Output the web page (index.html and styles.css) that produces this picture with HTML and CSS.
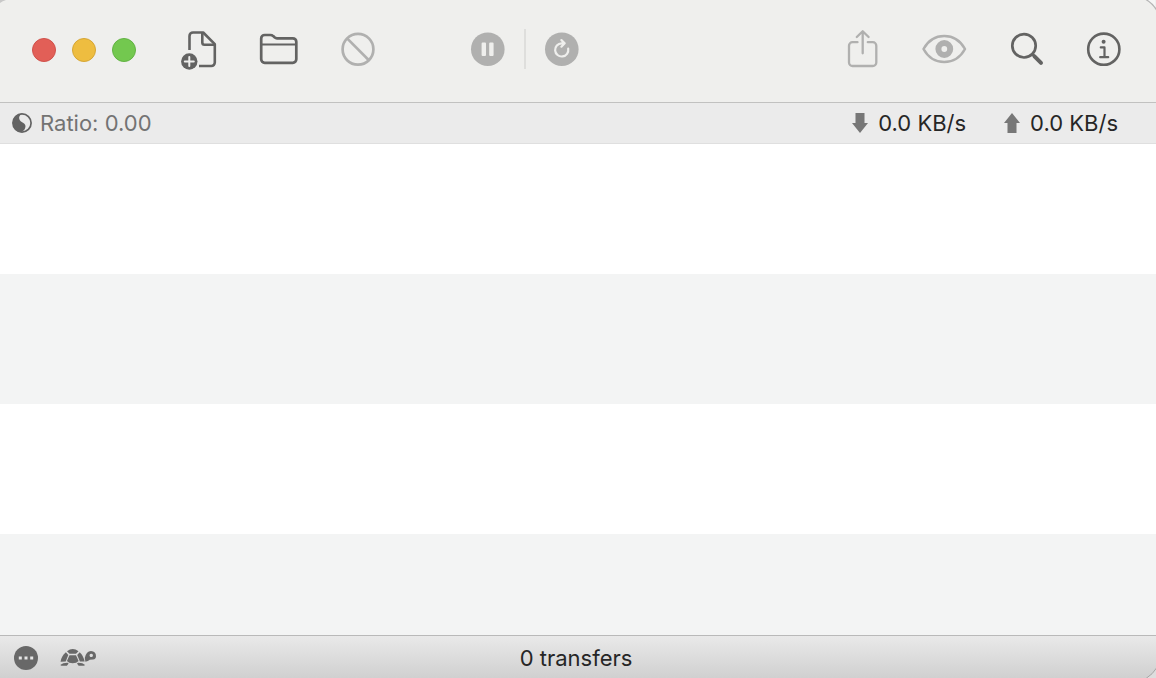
FILE: index.html
```html
<!DOCTYPE html>
<html lang="en">
<head>
<meta charset="utf-8">
<title>Transfers</title>
<link rel="stylesheet" href="styles.css">
</head>
<body>
<div class="window">
  <header class="toolbar">
    <div class="lights">
      <button class="light close" aria-label="Close"></button>
      <button class="light minimize" aria-label="Minimize"></button>
      <button class="light maximize" aria-label="Zoom"></button>
    </div>
    <div class="group files">
      <button class="tool" aria-label="Create torrent file">
        <svg width="40" height="42" viewBox="0 0 40 42" fill="none" stroke="currentColor" stroke-width="2.6" stroke-linejoin="round">
          <path d="M9.500 22V8a3.500 3.500 0 0 1 3.500-3.500h10.200L34.800 16.200v18.300a3.500 3.500 0 0 1-3.500 3.500H19"/>
          <path d="M22.300 4.500v10a2.200 2.200 0 0 0 2.200 2.200h10.300"/>
          <circle cx="9.300" cy="33.500" r="8.200" fill="currentColor" stroke="none"/>
          <path stroke="#efefed" stroke-width="2" stroke-linecap="round" d="M9.300 29v9M4.800 33.500h9"/>
        </svg>
      </button>
      <button class="tool" aria-label="Open torrent file">
        <svg width="40" height="40" viewBox="0 0 40 40" fill="none" stroke="currentColor" stroke-width="2.700" stroke-linejoin="round">
          <path d="M2.200 30V9.500a3.500 3.500 0 0 1 3.500-3.500h5.500c1.300 0 2.200.3 3 1.100l1.300 1.200c.8.7 1.400 1 2.500 1h15.800a3.500 3.500 0 0 1 3.500 3.500V30.300a3.500 3.500 0 0 1-3.500 3.500H5.700a3.500 3.500 0 0 1-3.500-3.500z"/>
          <path stroke-width="2.200" d="M2.200 15.500h35"/>
        </svg>
      </button>
      <button class="tool dim" aria-label="Remove" disabled>
        <svg width="40" height="40" viewBox="0 0 40 40" fill="none" stroke="currentColor" stroke-width="2.700">
          <circle cx="20" cy="20.300" r="15.400"/>
          <path d="M9.100 9.400l21.800 21.800"/>
        </svg>
      </button>
    </div>
    <div class="group playback">
      <button class="tool dim" aria-label="Pause all" disabled>
        <svg width="40" height="40" viewBox="0 0 40 40">
          <circle cx="19.800" cy="20.200" r="16.800" fill="currentColor"/>
          <path fill="#efefed" d="M14.600 13.500h2.400q1 0 1 1v11.500q0 1-1 1h-2.400q-1 0-1-1V14.500q0-1 1-1zM22.200 13.500h2.400q1 0 1 1v11.500q0 1-1 1h-2.400q-1 0-1-1V14.500q0-1 1-1z"/>
        </svg>
      </button>
      <span class="divider"></span>
      <button class="tool dim" aria-label="Resume all" disabled>
        <svg width="40" height="40" viewBox="0 0 40 40">
          <circle cx="19.800" cy="20.200" r="16.800" fill="currentColor"/>
          <path fill="none" stroke="#efefed" stroke-width="2.200" stroke-linecap="round" stroke-linejoin="round" d="M26.200 19.700a6.600 6.600 0 1 1-6.600-5.400h2.600M19.400 11.100l3.300 3.200-3.300 3.400"/>
        </svg>
      </button>
    </div>
    <div class="group actions">
      <button class="tool dim" aria-label="Share" disabled>
        <svg width="40" height="40" viewBox="0 0 40 40" fill="none" stroke="currentColor" stroke-width="2.300" stroke-linecap="round" stroke-linejoin="round">
          <path d="M15.500 13.200h-5a3.500 3.500 0 0 0-3.500 3.500V33.500a3.500 3.500 0 0 0 3.500 3.500h20.300a3.500 3.500 0 0 0 3.500-3.500V16.700a3.500 3.500 0 0 0-3.500-3.500h-5"/>
          <path d="M20.700 24.300V2.700M14.800 8l5.900-5.800L26.600 8"/>
        </svg>
      </button>
      <button class="tool dim" aria-label="Quick Look" disabled>
        <svg width="48" height="40" viewBox="0 0 48 40" fill="none" stroke="currentColor">
          <path stroke-width="2.500" stroke-linejoin="round" d="M3.500 20C8 11.800 15.500 7 24.200 7S40.500 11.800 45 20C40.500 28.200 32.900 33 24.200 33S8 28.200 3.500 20z"/>
          <circle cx="24.300" cy="20" r="5.900" stroke-width="6"/>
        </svg>
      </button>
      <button class="tool" aria-label="Filter">
        <svg width="40" height="40" viewBox="0 0 40 40" fill="none" stroke="currentColor" stroke-linecap="round">
          <circle cx="18" cy="16.800" r="11.700" stroke-width="2.700"/>
          <path stroke-width="2.700" d="M26.500 25.300l2 2"/>
          <path stroke-width="4" d="M28.500 27.300l6.500 6.500"/>
        </svg>
      </button>
      <button class="tool" aria-label="Inspector">
        <svg width="40" height="40" viewBox="0 0 40 40" fill="none" stroke="currentColor">
          <circle cx="19.800" cy="20.200" r="15.600" stroke-width="2.600"/>
          <circle cx="19.600" cy="12.800" r="2" fill="currentColor" stroke="none"/>
          <path stroke-width="2.200" stroke-linecap="round" stroke-linejoin="round" d="M16.800 18.400h3.700v9.700M16.200 28.200h8"/>
        </svg>
      </button>
    </div>
    <svg class="corner corner-left" width="8" height="4" viewBox="0 0 8 4"><path fill="#c8c8c8" d="M0 0h6Q2.500 1 0 3z"/></svg>
    <svg class="corner corner-right" width="12" height="12" viewBox="0 0 12 12"><path fill="#f6f6f6" stroke="#b4b4b4" stroke-width="1.200" d="M1-1Q8 2.500 12.500 10V-1z"/></svg>
  </header>

  <section class="statusbar">
    <div class="ratio">
      <svg width="20" height="20" viewBox="0 0 20 20">
        <circle cx="10" cy="10" r="9.100" fill="none" stroke="currentColor" stroke-width="1.700"/>
        <path fill="currentColor" d="M10 .4C7.500 2 6.800 4 7.300 6c.5 2 2 2.800 3.700 3.700 2.200 1.200 3.100 3.200 2.100 5.500-.8 2-2.300 3.500-5 4.100A9.600 9.600 0 0 1 10 .4z"/>
      </svg>
      <span>Ratio: 0.00</span>
    </div>
    <div class="speeds">
      <div class="speed">
        <svg width="16" height="20" viewBox="0 0 16 20"><path fill="currentColor" d="M3.500 0h9v10H16L8 20 0 10h3.500z"/></svg>
        <span>0.0 KB/s</span>
      </div>
      <div class="speed">
        <svg width="16" height="20" viewBox="0 0 16 20"><path fill="currentColor" d="M3.500 20h9V10H16L8 0 0 10h3.500z"/></svg>
        <span>0.0 KB/s</span>
      </div>
    </div>
  </section>

  <main class="list"></main>

  <footer class="bottombar">
    <div class="bottom-tools">
      <button class="tool" aria-label="Actions">
        <svg width="24" height="24" viewBox="0 0 24 24">
          <circle cx="12" cy="12" r="12" fill="currentColor"/>
          <path fill="#e6e6e6" d="M4.800 10.500h3v3h-3zM10.500 10.500h3v3h-3zM16.200 10.500h3v3h-3z"/>
        </svg>
      </button>
      <button class="tool" aria-label="Speed limit">
        <svg width="36" height="24" viewBox="0 0 36 24" fill="currentColor">
          <path d="M7 5.300Q12.700.9 18.500 5.300L16 7.800H9.500z"/>
          <path d="M5.900 6.300L8.300 8.900 5.700 15.600.6 15.800Q1.300 10 5.900 6.300z"/>
          <path d="M9.500 9.200h6.500l2.600 5.800q-2 2.200-5.900 2.200T6.900 15z"/>
          <path d="M19.700 6.300Q23.300 9.500 24.600 15.500L19.900 15.600 17.200 8.900z"/>
          <path d="M.6 18.700Q3 16.700 7.600 16.800l1 .6-1.700 2.400H2Q.2 19.900.6 18.700zM17 17.400l1-.6q4.800-.1 6.800 1.900.3 1.100-1.200 1.100h-5z"/>
          <path fill-rule="evenodd" d="M25.400 15.700L24.800 12Q26.300 5 31 5q5 .2 5 5.300 0 3-3 3.200l-3.200.3q-1.700 1.700-4.400 1.900zM31.200 7.700a1.700 1.700 0 1 0 .1 0z"/>
        </svg>
      </button>
    </div>
    <div class="count">0 transfers</div>
    <svg class="grip" width="12" height="12" viewBox="0 0 12 12"><path fill="#dedede" stroke="#a6a6a6" d="M12.500 2Q9 8 2 12.500h11z"/></svg>
  </footer>
</div>
</body>
</html>
```
FILE: styles.css
```css
* {
  box-sizing: border-box;
}

body {
  margin: 0;
  font-family: Inter, "Liberation Sans", sans-serif;
  font-size: 22px;
  line-height: 28px;
  color: #262626;
}

button {
  padding: 0;
  border: 0;
  background: none;
}

svg {
  display: block;
  flex: none;
}

.window {
  display: flex;
  flex-direction: column;
  min-height: 100vh;
  background: #fff;
}

.toolbar {
  position: relative;
  display: flex;
  align-items: center;
  padding: 28px 32px 32px;
  background: #efefed;
  border-bottom: 1px solid #c1c1c0;
}

.corner {
  position: absolute;
  top: 0;
}

.corner-left {
  left: 0;
}

.corner-right {
  right: 0;
}

.lights {
  display: flex;
  gap: 16px;
  padding-top: 2px;
}

.light {
  width: 24px;
  height: 24px;
  border: 1px solid;
  border-radius: 50%;
}

.close {
  background: #e25f57;
  border-color: #d0514b;
}

.minimize {
  background: #eebd40;
  border-color: #d6a635;
}

.maximize {
  background: #73c84f;
  border-color: #62b344;
}

.group {
  display: flex;
  align-items: center;
}

.tool {
  color: #636362;
}

.dim {
  color: #b0b0af;
}

.files {
  gap: 39px;
  margin-left: 44px;
}

.playback {
  gap: 16px;
  margin-left: 90px;
}

.divider {
  width: 2px;
  height: 40px;
  background: #dededc;
}

.actions {
  gap: 38px;
  margin-left: auto;
}

.statusbar {
  display: flex;
  align-items: center;
  justify-content: space-between;
  padding: 6px 38px 6px 12px;
  background: #ebebeb;
  border-bottom: 1px solid #dfdfdf;
}

.ratio,
.speed {
  display: flex;
  align-items: center;
}

.ratio {
  gap: 8px;
  color: #737373;
}

.ratio svg {
  color: #636363;
}

.speeds {
  display: flex;
  gap: 38px;
}

.speed {
  gap: 10px;
}

.speed svg {
  color: #777;
}

.list {
  flex: 1;
  background: repeating-linear-gradient(#fff 0 130px, #f3f4f4 130px 260px);
}

.bottombar {
  position: relative;
  display: grid;
  grid-template-columns: 1fr auto 1fr;
  align-items: center;
  padding: 8px 18px 6px 14px;
  border-top: 1px solid #b9b9b9;
  background: linear-gradient(#e9e9e9, #d0d0d0);
}

.bottom-tools {
  display: flex;
  gap: 22px;
}

.bottom-tools .tool {
  color: #686868;
}

.grip {
  position: absolute;
  right: 0;
  bottom: 0;
}
```
